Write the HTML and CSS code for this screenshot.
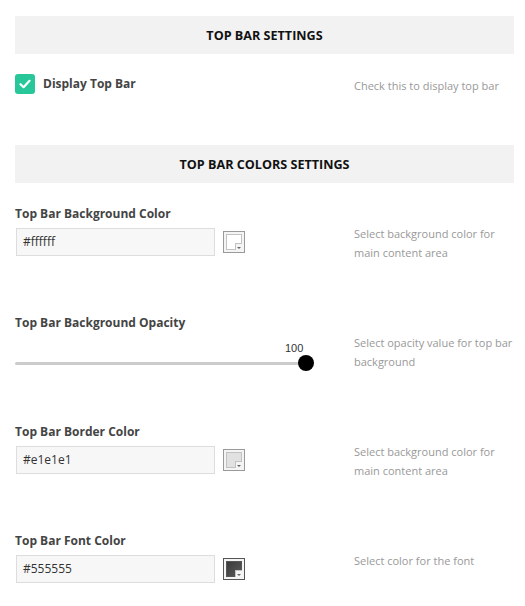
FILE: index.html
```html
<!DOCTYPE html>
<html>
<head>
<meta charset="utf-8">
<link rel="stylesheet" href="styles.css">
</head>
<body>
<div class="page">
  <div class="section-head">TOP BAR SETTINGS</div>
  <div class="check-row">
    <label class="check">
      <span class="check-box">
        <svg width="12" height="10" viewBox="0 0 12 10"><path d="M1.5 5.2 L4.6 8.2 L10.5 1.8" fill="none" stroke="#fff" stroke-width="2.2" stroke-linecap="round" stroke-linejoin="round"/></svg>
      </span>
      <span class="check-label">Display Top Bar</span>
    </label>
    <div class="desc check-desc">Check this to display top bar</div>
  </div>

  <div class="section-head second">TOP BAR COLORS SETTINGS</div>

  <div class="fields">
    <div class="field">
      <div class="field-main">
        <div class="label">Top Bar Background Color</div>
        <div class="color-ctrl">
          <div class="text-input">#ffffff</div>
          <div class="swatch"><span class="swatch-fill swatch-white"></span><span class="swatch-notch"></span></div>
        </div>
      </div>
      <div class="desc">Select background color for<br>main content area</div>
    </div>

    <div class="field">
      <div class="field-main">
        <div class="label">Top Bar Background Opacity</div>
        <div class="slider">
          <span class="slider-value">100</span>
          <span class="slider-track"></span>
          <span class="slider-thumb"></span>
        </div>
      </div>
      <div class="desc">Select opacity value for top bar<br>background</div>
    </div>

    <div class="field">
      <div class="field-main">
        <div class="label">Top Bar Border Color</div>
        <div class="color-ctrl">
          <div class="text-input">#e1e1e1</div>
          <div class="swatch"><span class="swatch-fill swatch-light"></span><span class="swatch-notch"></span></div>
        </div>
      </div>
      <div class="desc">Select background color for<br>main content area</div>
    </div>

    <div class="field">
      <div class="field-main">
        <div class="label">Top Bar Font Color</div>
        <div class="color-ctrl">
          <div class="text-input">#555555</div>
          <div class="swatch swatch-darkbox"><span class="swatch-fill swatch-dark"></span><span class="swatch-notch"></span></div>
        </div>
      </div>
      <div class="desc">Select color for the font</div>
    </div>
  </div>
</div>
</body>
</html>
```

FILE: styles.css
```css
html, body {
  margin: 0;
  padding: 0;
  background: #fff;
}
body {
  font-family: "Open Sans", "Noto Sans", sans-serif;
  color: #444;
}
.page {
  padding: 16px 11px 0 15px;
}
.section-head {
  background: #f2f2f2;
  height: 38px;
  display: flex;
  align-items: center;
  justify-content: center;
  font-size: 12.6px;
  font-weight: 700;
  color: #111;
}
.section-head.second {
  margin-top: 51px;
}
.check-row {
  display: flex;
  align-items: center;
  margin-top: 20px;
  height: 20px;
}
.check {
  display: flex;
  align-items: center;
  width: 339px;
}
.check-box {
  width: 20px;
  height: 20px;
  border-radius: 3px;
  background: #27c79a;
  display: flex;
  align-items: center;
  justify-content: center;
}
.check-label {
  margin-left: 8px;
  font-size: 12px;
  font-weight: 700;
  color: #444;
  position: relative;
  top: -1px;
}
.desc {
  font-size: 11px;
  line-height: 19px;
  color: #999;
}
.check-desc {
  position: relative;
  top: 1px;
}
.fields {
  margin-top: 22px;
}
.field {
  display: flex;
  height: 109px;
}
.field:last-child {
  height: auto;
}
.field-main {
  width: 339px;
}
.field .desc {
  margin-top: 19px;
}
.label {
  font-size: 12px;
  font-weight: 700;
  line-height: 18px;
  color: #444;
}
.color-ctrl {
  display: flex;
  align-items: center;
  margin-top: 5px;
  margin-left: 1px;
}
.text-input {
  width: 191px;
  height: 26px;
  border: 1px solid #dddddd;
  background: #f7f7f7;
  font-size: 12px;
  line-height: 26px;
  padding-left: 6px;
  color: #333;
}
.swatch {
  position: relative;
  margin-left: 8px;
  width: 20px;
  height: 20px;
  border: 1px solid #9a9a9a;
  background: #f4f4f4;
  display: flex;
  align-items: center;
  justify-content: center;
}
.swatch-fill {
  width: 14px;
  height: 14px;
  border: 1px solid #c2c2c2;
  display: block;
}
.swatch-white { background: #ffffff; }
.swatch-light { background: #e1e1e1; }
.swatch-dark { background: linear-gradient(135deg, #3a3a3a, #5a5a5a); border-color: #555; }
.swatch-darkbox { border-color: #555; }
.swatch-notch {
  position: absolute;
  right: 2px;
  bottom: 2px;
  width: 6px;
  height: 6px;
  background: #f4f4f4;
  border-left: 1px solid #c2c2c2;
  border-top: 1px solid #c2c2c2;
}
.swatch-notch::after {
  content: "";
  position: absolute;
  left: 1px;
  top: 3px;
  border-left: 2px solid transparent;
  border-right: 2px solid transparent;
  border-top: 2px solid #666;
}
.slider {
  position: relative;
  width: 300px;
  height: 40px;
}
.slider-value {
  position: absolute;
  left: 270px;
  top: 10px;
  font-family: "Liberation Sans", Arial, sans-serif;
  font-size: 11px;
  color: #333;
}
.slider-track {
  position: absolute;
  left: 0;
  top: 30px;
  width: 291px;
  height: 3px;
  background: #cccccc;
  border-radius: 2px;
}
.slider-thumb {
  position: absolute;
  left: 283px;
  top: 23px;
  width: 16px;
  height: 16px;
  border-radius: 50%;
  background: #000;
}
```
